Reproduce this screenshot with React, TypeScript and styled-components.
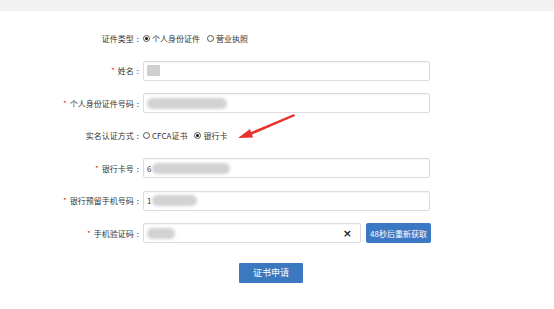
import styled, { createGlobalStyle } from "styled-components";

const Global = createGlobalStyle`
  body {
    margin: 0;
    background: #fff;
    font-family: "Noto Sans CJK SC", "Liberation Sans", sans-serif;
    font-size: 8px;
    color: #333;
  }
`;

const Page = styled.div`
  position: relative;
  width: 554px;
  height: 309px;
  overflow: hidden;
`;

const TopBar = styled.div`
  height: 11px;
  background: #f2f2f2;
`;

const Form = styled.div`
  display: grid;
  grid-template-columns: 143px 1fr;
  row-gap: 12.5px;
  padding-top: 17px;
`;

const Label = styled.div`
  height: 20px;
  display: flex;
  align-items: center;
  justify-content: flex-end;
  padding-right: 4px;
  white-space: nowrap;
`;

const Colon = styled.span`
  margin-left: 3px;
`;

const Star = styled.span`
  color: #e4393c;
  margin-right: 3px;
`;

const Field = styled.div`
  height: 20px;
  display: flex;
  align-items: center;
  gap: 5px;
`;

const Radio = styled.label`
  display: flex;
  align-items: center;
  gap: 2px;
  margin-right: 2px;
`;

const Dot = styled.span<{ $on?: boolean }>`
  width: 7px;
  height: 7px;
  border-radius: 50%;
  border: 1px solid #555;
  box-sizing: border-box;
  display: flex;
  align-items: center;
  justify-content: center;
  &::after {
    content: "";
    width: 3px;
    height: 3px;
    border-radius: 50%;
    background: ${(p) => (p.$on ? "#111" : "transparent")};
  }
`;

const Input = styled.div<{ $w?: number }>`
  position: relative;
  width: ${(p) => p.$w ?? 287}px;
  height: 20px;
  box-sizing: border-box;
  border: 1px solid #dcdcdc;
  border-radius: 2px;
  box-shadow: inset 0 1px 1px rgba(0, 0, 0, 0.04);
  display: flex;
  align-items: center;
  padding-left: 3px;
  gap: 1px;
`;

const Blur = styled.span<{ $w: number; $soft?: boolean }>`
  display: inline-block;
  width: ${(p) => p.$w}px;
  height: 11px;
  background: ${(p) => (p.$soft ? "#d2d2d2" : "#cfcfcf")};
  border-radius: ${(p) => (p.$soft ? "6px" : "1px")};
  filter: blur(${(p) => (p.$soft ? 1.5 : 0.4)}px);
`;

const Clear = styled.span`
  position: absolute;
  right: 8px;
  font-size: 11px;
  font-weight: bold;
  color: #222;
  font-family: "DejaVu Sans", sans-serif;
`;

const SmsButton = styled.button`
  height: 20px;
  width: 65px;
  padding: 0;
  border: 0;
  border-radius: 2px;
  background: #3a78c3;
  color: #fff;
  font-family: inherit;
  font-size: 8px;
`;

const SubmitRow = styled.div`
  grid-column: 2;
  padding-left: 96px;
  padding-top: 7px;
`;

const Submit = styled.button`
  width: 64px;
  height: 20px;
  padding: 0;
  border: 0;
  border-radius: 1px;
  background: #3b78c0;
  color: #fff;
  font-family: inherit;
  font-size: 9px;
`;

const Arrow = styled.svg`
  position: absolute;
  left: 234px;
  top: 112px;
`;

export default function App() {
  return (
    <Page>
      <Global />
      <TopBar />
      <Form>
        <Label>证件类型<Colon>:</Colon></Label>
        <Field>
          <Radio><Dot $on />个人身份证件</Radio>
          <Radio><Dot />营业执照</Radio>
        </Field>

        <Label><Star>*</Star>姓名<Colon>:</Colon></Label>
        <Field>
          <Input><Blur $w={13} /></Input>
        </Field>

        <Label><Star>*</Star>个人身份证件号码<Colon>:</Colon></Label>
        <Field>
          <Input><Blur $w={80} $soft /></Input>
        </Field>

        <Label>实名认证方式<Colon>:</Colon></Label>
        <Field>
          <Radio><Dot />CFCA证书</Radio>
          <Radio><Dot $on />银行卡</Radio>
        </Field>

        <Label><Star>*</Star>银行卡号<Colon>:</Colon></Label>
        <Field>
          <Input>6<Blur $w={78} $soft /></Input>
        </Field>

        <Label><Star>*</Star>银行预留手机号码<Colon>:</Colon></Label>
        <Field>
          <Input>1<Blur $w={45} $soft /></Input>
        </Field>

        <Label><Star>*</Star>手机验证码<Colon>:</Colon></Label>
        <Field>
          <Input $w={218}>
            <Blur $w={28} $soft />
            <Clear>×</Clear>
          </Input>
          <SmsButton>48秒后重新获取</SmsButton>
        </Field>

        <SubmitRow>
          <Submit>证书申请</Submit>
        </SubmitRow>
      </Form>

      <Arrow width="64" height="30" viewBox="0 0 64 30">
        <path d="M60 2 L17 20 L16 17 L4 26 L19 25.5 L18 22.5 L61 4 Z" fill="#e8322b" />
      </Arrow>
    </Page>
  );
}
